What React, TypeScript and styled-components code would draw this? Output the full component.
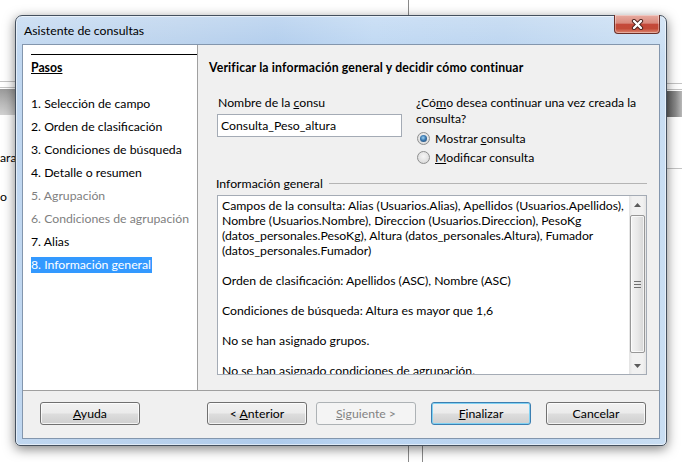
import styled, { createGlobalStyle, css } from "styled-components";

const GlobalStyle = createGlobalStyle`
  html, body {
    margin: 0;
    padding: 0;
    background: #ffffff;
  }
  body {
    font-family: "Segoe UI", Lato, "Open Sans", sans-serif;
    font-size: 12.25px;
    color: #000;
  }
`;

const steps = [
  { label: "1. Selección de campo" },
  { label: "2. Orden de clasificación" },
  { label: "3. Condiciones de búsqueda" },
  { label: "4. Detalle o resumen" },
  { label: "5. Agrupación", disabled: true },
  { label: "6. Condiciones de agrupación", disabled: true },
  { label: "7. Alias" },
  { label: "8. Información general", active: true },
];

const summary = [
  [
    "Campos de la consulta: Alias (Usuarios.Alias), Apellidos (Usuarios.Apellidos),",
    "Nombre (Usuarios.Nombre), Direccion (Usuarios.Direccion), PesoKg",
    "(datos_personales.PesoKg), Altura (datos_personales.Altura), Fumador",
    "(datos_personales.Fumador)",
  ],
  ["Orden de clasificación: Apellidos (ASC), Nombre (ASC)"],
  ["Condiciones de búsqueda: Altura es mayor que 1,6"],
  ["No se han asignado grupos."],
  ["No se han asignado condiciones de agrupación."],
];

const CloseGlyph = () => (
  <svg width="13" height="11" viewBox="0 0 13 11">
    <path d="M3 2 L10 9 M10 2 L3 9" stroke="#4a211c" strokeWidth="4.2" strokeLinecap="round" />
    <path d="M3 2 L10 9 M10 2 L3 9" stroke="#ffffff" strokeWidth="2.4" strokeLinecap="round" />
  </svg>
);

const Arrow = ({ up }: { up?: boolean }) => (
  <svg width="7" height="4" viewBox="0 0 7 4">
    <path d={up ? "M0 4 L3.5 0 L7 4 Z" : "M0 0 L3.5 4 L7 0 Z"} fill="#5b5b5b" />
  </svg>
);

export default function App() {
  return (
    <Desktop>
      <GlobalStyle />

      <BackStrip $side="left">
        <BackRule />
        <BackRule />
        <BackBar />
        <BackText $gap={31}>ara</BackText>
        <BackText $gap={20}>o</BackText>
      </BackStrip>
      <BackStrip $side="right">
        <BackRule />
        <BackRule />
        <BackBar $dark />
        <BackRule $gap={51} />
      </BackStrip>
      <BackLine $x={408} $top={0} $height={16} />
      <BackLine $x={408} $top={445} $height={17} />
      <BackLine $x={422} $top={445} $height={17} />

      <Window>
        <TitleBar>
          <Title>Asistente de consultas</Title>
          <CloseButton>
            <CloseGlyph />
          </CloseButton>
        </TitleBar>

        <Client>
          <Main>
            <StepPane>
              <StepHeader>Pasos</StepHeader>
              <StepList>
                {steps.map((s) => (
                  <Step key={s.label} $disabled={s.disabled} $active={s.active}>
                    <span>{s.label}</span>
                  </Step>
                ))}
              </StepList>
            </StepPane>

            <ContentPane>
              <Heading>Verificar la información general y decidir cómo continuar</Heading>

              <OptionsRow>
                <NameColumn>
                  <FieldLabel>
                    Nombre de la <Key>c</Key>onsu
                  </FieldLabel>
                  <TextInput>Consulta_Peso_altura</TextInput>
                </NameColumn>

                <ChoiceColumn>
                  <Label>
                    ¿Có<Key>m</Key>o desea continuar una vez creada la
                  </Label>
                  <Label>consulta?</Label>
                  <RadioGroup>
                    <RadioRow>
                      <Radio $checked />
                      <span>
                        Mostrar <Key>c</Key>onsulta
                      </span>
                    </RadioRow>
                    <RadioRow>
                      <Radio />
                      <span>
                        <Key>M</Key>odificar consulta
                      </span>
                    </RadioRow>
                  </RadioGroup>
                </ChoiceColumn>
              </OptionsRow>

              <GroupHeader>
                <span>Información general</span>
                <GroupRule />
              </GroupHeader>

              <SummaryBox>
                <SummaryText>
                  {summary.map((para, i) => (
                    <Paragraph key={i}>
                      {para.map((line) => (
                        <Line key={line}>{line}</Line>
                      ))}
                    </Paragraph>
                  ))}
                </SummaryText>
                <ScrollBar>
                  <ScrollArrow>
                    <Arrow up />
                  </ScrollArrow>
                  <Thumb>
                    <Grip />
                  </Thumb>
                  <Track />
                  <ScrollArrow>
                    <Arrow />
                  </ScrollArrow>
                </ScrollBar>
              </SummaryBox>
            </ContentPane>
          </Main>

          <ButtonRow>
            <Button>
              <Key>A</Key>yuda
            </Button>
            <Spacer />
            <Button>
              &lt; <Key>A</Key>nterior
            </Button>
            <Button disabled>
              <Key>S</Key>iguiente &gt;
            </Button>
            <Button $default $gapBefore={15}>
              <Key>F</Key>inalizar
            </Button>
            <Button $gapBefore={15}>Cancelar</Button>
          </ButtonRow>
        </Client>
      </Window>
    </Desktop>
  );
}

const Desktop = styled.div`
  position: relative;
  width: 682px;
  height: 462px;
  overflow: hidden;
  background: #ffffff;
`;

const BackStrip = styled.div<{ $side: "left" | "right" }>`
  position: absolute;
  top: 81px;
  ${(p) => (p.$side === "left" ? "left: 0; width: 16px;" : "right: 0; width: 16px; top: 83px;")}
  display: flex;
  flex-direction: column;
  gap: 5px;
  overflow: hidden;
`;

const BackRule = styled.div<{ $gap?: number }>`
  height: 1px;
  background: #c4c4c4;
  margin-top: ${(p) => (p.$gap ? p.$gap - 5 : 0)}px;
`;

const BackBar = styled.div<{ $dark?: boolean }>`
  height: 26px;
  margin-top: -4px;
  background: ${(p) =>
    p.$dark
      ? "linear-gradient(90deg, #606060, #8a8a8a 60%, #b8b8b8)"
      : "linear-gradient(#9a9a9a, #bdbdbd 60%, #d2d2d2)"};
`;

const BackText = styled.div<{ $gap: number }>`
  margin-top: ${(p) => p.$gap}px;
  line-height: 14px;
  white-space: nowrap;
`;

const BackLine = styled.div<{ $x: number; $top: number; $height: number }>`
  position: absolute;
  left: ${(p) => p.$x}px;
  top: ${(p) => p.$top}px;
  width: 1px;
  height: ${(p) => p.$height}px;
  background: #8a8a8a;
`;

const Window = styled.div`
  position: absolute;
  left: 15px;
  top: 15px;
  width: 652px;
  height: 431px;
  box-sizing: border-box;
  padding: 0 6px 6px;
  display: flex;
  flex-direction: column;
  border: 1px solid #44505e;
  border-radius: 7px 7px 5px 5px;
  background:
    linear-gradient(rgba(255, 255, 255, 0.25), rgba(255, 255, 255, 0) 40px),
    linear-gradient(90deg, #c0d7f0 0%, #b7d0ec 25%, #aecbec 40%, #bcd6f2 55%, #b9d3ef 75%, #c9def3 100%);
  box-shadow:
    inset 0 0 0 1px rgba(255, 255, 255, 0.55),
    0 3px 12px rgba(0, 0, 0, 0.5);
`;

const TitleBar = styled.div`
  height: 28px;
  display: flex;
  align-items: center;
  justify-content: space-between;
  padding-left: 2px;
`;

const Title = styled.span`
  color: #000;
`;

const CloseButton = styled.div`
  align-self: flex-start;
  margin-top: -1px;
  width: 46px;
  height: 19px;
  box-sizing: border-box;
  display: flex;
  align-items: center;
  justify-content: center;
  border: 1px solid #6b2f28;
  border-top: none;
  border-radius: 0 0 4px 4px;
  background: linear-gradient(#e8aca1 0%, #d98a7d 45%, #c4493a 52%, #c34a37 75%, #dc8670 100%);
  box-shadow: inset 0 0 0 1px rgba(255, 255, 255, 0.35);
`;

const Client = styled.div`
  flex: 1;
  display: flex;
  flex-direction: column;
  border: 1px solid #8396ad;
  background: #f0f0f0;
  min-height: 0;
`;

const Main = styled.div`
  height: 345px;
  display: flex;
  border-bottom: 1px solid #a0a0a0;
`;

const StepPane = styled.div`
  width: 175px;
  box-sizing: border-box;
  padding: 9px 0 0 8px;
  background: #ffffff;
  border-right: 1px solid #a0a0a0;
`;

const StepHeader = styled.div`
  border-top: 1px solid #000;
  padding-top: 5px;
  line-height: 16px;
  font-weight: bold;
  text-decoration: underline;
`;

const StepList = styled.div`
  margin-top: 20px;
  display: flex;
  flex-direction: column;
  gap: 7px;
`;

const Step = styled.div<{ $disabled?: boolean; $active?: boolean }>`
  line-height: 16px;
  white-space: nowrap;
  color: ${(p) => (p.$disabled ? "#7f7f7f" : "#000")};
  span {
    display: inline-block;
    padding-right: 1px;
    ${(p) =>
      p.$active &&
      css`
        background: #3399ff;
        color: #ffffff;
      `}
  }
`;

const ContentPane = styled.div`
  flex: 1;
  display: flex;
  flex-direction: column;
  padding: 15px 12px 0 11px;
`;

const Heading = styled.div`
  line-height: 16px;
  font-weight: bold;
  letter-spacing: 0.15px;
`;

const OptionsRow = styled.div`
  margin-top: 19px;
  display: flex;
  gap: 14px;
`;

const NameColumn = styled.div`
  width: 185px;
  margin-left: 8px;
  display: flex;
  flex-direction: column;
`;

const ChoiceColumn = styled.div`
  display: flex;
  flex-direction: column;
`;

const Label = styled.div`
  line-height: 16px;
  white-space: nowrap;
`;

const FieldLabel = styled(Label)`
  padding-left: 1px;
`;

const Key = styled.span`
  text-decoration: underline;
`;

const TextInput = styled.div`
  margin-top: 3px;
  height: 23px;
  box-sizing: border-box;
  padding: 0 3px;
  line-height: 21px;
  background: #ffffff;
  border: 1px solid #a4abb5;
`;

const RadioGroup = styled.div`
  margin-top: 2px;
  display: flex;
  flex-direction: column;
`;

const RadioRow = styled.div`
  height: 19px;
  display: flex;
  align-items: center;
  gap: 5px;
  margin-left: 1px;
`;

const Radio = styled.span<{ $checked?: boolean }>`
  position: relative;
  width: 13px;
  height: 13px;
  box-sizing: border-box;
  border-radius: 50%;
  border: 1px solid #8e8f8f;
  background: radial-gradient(circle at 50% 40%, #f6f6f6 0%, #e2e2e2 60%, #cfcfcf 100%);
  ${(p) =>
    p.$checked &&
    css`
      &::after {
        content: "";
        position: absolute;
        inset: 2px;
        border-radius: 50%;
        background: radial-gradient(circle at 45% 40%, #9fd3f2 0%, #3b78b0 45%, #1d3e63 100%);
      }
    `}
`;

const GroupHeader = styled.div`
  margin-top: 8px;
  margin-left: 7px;
  height: 16px;
  display: flex;
  align-items: center;
  gap: 6px;
  white-space: nowrap;
`;

const GroupRule = styled.div`
  flex: 1;
  height: 1px;
  background: #b4b4b4;
`;

const SummaryBox = styled.div`
  margin-top: 4px;
  margin-left: 8px;
  height: 180px;
  box-sizing: border-box;
  display: flex;
  background: #ffffff;
  border: 1px solid #a4abb5;
`;

const SummaryText = styled.div`
  flex: 1;
  padding: 2px 0 0 4px;
  line-height: 15px;
  overflow: hidden;
`;

const Paragraph = styled.div`
  margin-bottom: 15px;
`;

const Line = styled.div`
  white-space: nowrap;
`;

const ScrollBar = styled.div`
  width: 17px;
  display: flex;
  flex-direction: column;
  background: linear-gradient(90deg, #e3e3e3, #f1f1f1 20%, #f1f1f1 80%, #e6e6e6);
`;

const ScrollArrow = styled.div`
  height: 17px;
  display: flex;
  align-items: center;
  justify-content: center;
`;

const Thumb = styled.div`
  margin: 2px 1px 0;
  height: 138px;
  box-sizing: border-box;
  display: flex;
  align-items: center;
  justify-content: center;
  border: 1px solid #979797;
  border-radius: 2px;
  background: linear-gradient(90deg, #f3f3f3, #e8e8e8 50%, #d6d6d6);
  box-shadow: inset 0 0 0 1px rgba(255, 255, 255, 0.7);
`;

const Grip = styled.div`
  width: 7px;
  height: 5px;
  border-top: 1px solid #6f6f6f;
  border-bottom: 1px solid #6f6f6f;
  position: relative;
  &::after {
    content: "";
    position: absolute;
    left: 0;
    right: 0;
    top: 2px;
    height: 1px;
    background: #6f6f6f;
  }
`;

const Track = styled.div`
  flex: 1;
`;

const ButtonRow = styled.div`
  flex: 1;
  display: flex;
  align-items: flex-start;
  padding: 11px 13px 0 17px;
  gap: 9px;
`;

const Spacer = styled.div`
  flex: 1;
`;

const Button = styled.button<{ $default?: boolean; $gapBefore?: number }>`
  width: 100px;
  height: 23px;
  box-sizing: border-box;
  padding: 0;
  margin-left: ${(p) => (p.$gapBefore ? p.$gapBefore - 9 : 0)}px;
  font: inherit;
  color: #000;
  border: 1px solid #707070;
  border-radius: 3px;
  background: linear-gradient(#f2f2f2 0%, #ebebeb 48%, #dddddd 52%, #cfcfcf 100%);
  box-shadow: inset 0 0 0 1px rgba(255, 255, 255, 0.75);
  ${(p) =>
    p.$default &&
    css`
      border-color: #3c7fb1;
      box-shadow: inset 0 0 0 1px #7fd1f3;
    `}
  &:disabled {
    color: #838383;
    border-color: #adb2b5;
    background: #f4f4f4;
    box-shadow: none;
  }
`;
